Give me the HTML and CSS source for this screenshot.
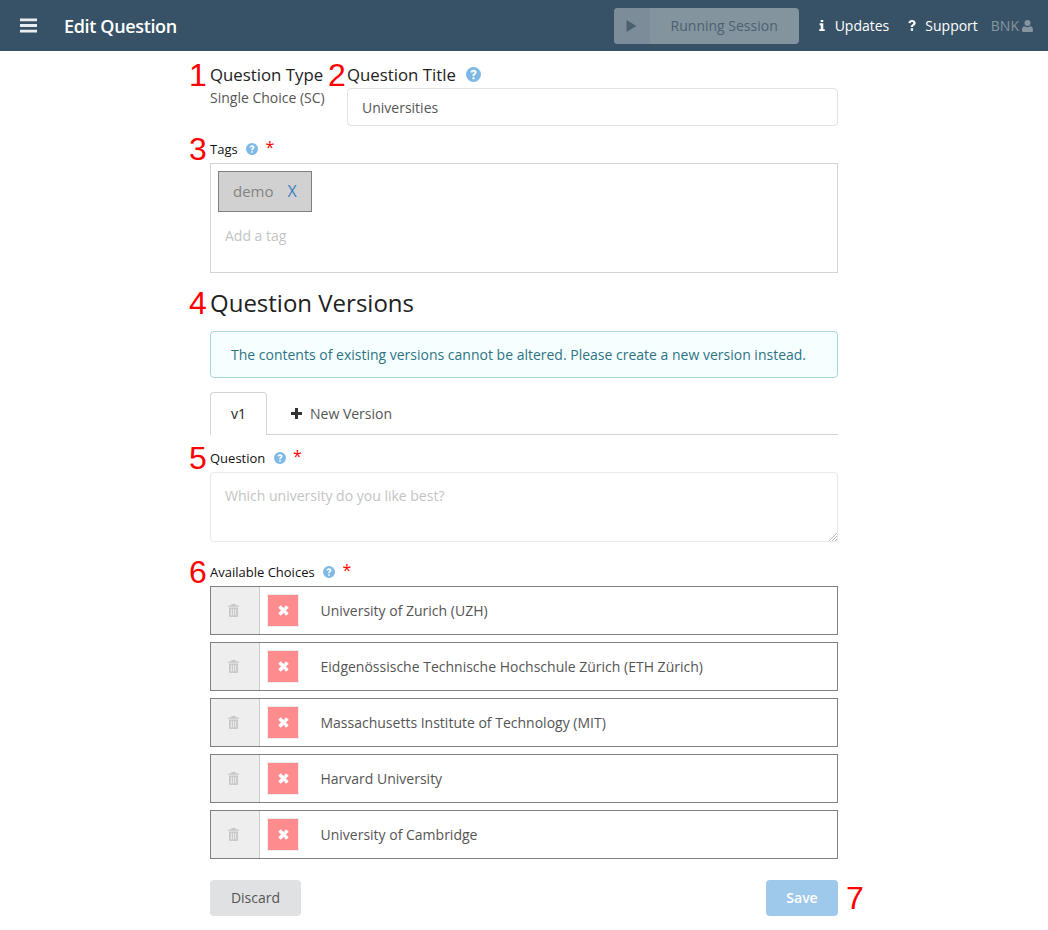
FILE: index.html
```html
<!DOCTYPE html>
<html lang="en">
<head>
  <meta charset="UTF-8" />
  <title>Edit Question</title>
  <link rel="stylesheet" href="styles.css">
</head>
<body>
  <header class="topbar">
    <svg class="menu-icon" viewBox="0 0 16 14"><path d="M0 0.5h16v2.6H0zM0 5.7h16v2.6H0zM0 10.9h16v2.6H0z"/></svg>
    <div class="page-title">Edit Question</div>
    <div class="session-btn">
      <span class="session-play"><svg viewBox="0 0 10 12"><path d="M0 0l10 6L0 12z"/></svg></span>
      <span class="session-text">Running Session</span>
    </div>
    <div class="nav-link nav-updates">
      <svg class="nav-icon" viewBox="0 0 6 12"><path d="M1.6 0h2.8v2.2H1.6zM.4 3.6h4v6.4H6V12H0v-2h1.6V5.6H.4z"/></svg>
      Updates
    </div>
    <div class="nav-link nav-support">
      <svg class="nav-icon" viewBox="0 0 8 12"><path d="M0 3.2C.3 1.2 1.9 0 4 0c2.200 0 4 1.300 4 3.300 0 1.500-.9 2.200-1.800 2.800-.7.5-1.100.8-1.100 1.500H2.700c0-1.400.7-2 1.500-2.600.7-.5 1.200-.8 1.200-1.500 0-.7-.6-1.200-1.400-1.200-.9 0-1.400.5-1.600 1.300zM2.600 9h2.600v2.700H2.600z"/></svg>
      Support
    </div>
    <div class="nav-user">
      BNK<svg class="user-icon" viewBox="0 0 11 12"><circle cx="5.500" cy="3" r="3"/><path d="M0 10.400C0 7.800 1 6.200 2.600 6.200c.8.600 1.800 1 2.900 1s2.100-.4 2.900-1C10 6.200 11 7.800 11 10.400c0 1-.7 1.600-1.600 1.600H1.600C.7 12 0 11.400 0 10.400z"/></svg>
    </div>
  </header>

  <main class="content">
    <div class="head-row">
      <div class="type-col">
        <span class="marker marker-1">1</span>
        <div class="big-label">Question Type</div>
        <div class="type-value">Single Choice (SC)</div>
      </div>
      <div class="title-col">
        <span class="marker marker-2">2</span>
        <div class="big-label">Question Title
          <svg class="help help-big" viewBox="0 0 16 16"><use href="#help-mark"/></svg>
        </div>
        <div class="text-input">Universities</div>
      </div>
    </div>

    <div class="small-label label-tags">
      <span class="marker marker-3">3</span>
      Tags
      <svg class="help" viewBox="0 0 16 16"><use href="#help-mark"/></svg>
      <span class="required">*</span>
    </div>
    <div class="tags-box">
      <div class="tag">demo <span class="tag-x">X</span></div>
      <div class="tag-placeholder">Add a tag</div>
    </div>

    <h2 class="versions-title"><span class="marker marker-4">4</span>Question Versions</h2>
    <div class="notice">The contents of existing versions cannot be altered. Please create a new version instead.</div>

    <div class="tabs">
      <div class="tab tab-active">v1</div>
      <div class="tab tab-new">
        <svg class="plus-icon" viewBox="0 0 11 11"><path d="M4 0h3v4h4v3H7v4H4V7H0V4h4z"/></svg>
        New Version
      </div>
    </div>

    <div class="small-label label-question">
      <span class="marker marker-5">5</span>
      Question
      <svg class="help" viewBox="0 0 16 16"><use href="#help-mark"/></svg>
      <span class="required">*</span>
    </div>
    <div class="question-box">
      Which university do you like best?
      <svg class="grip" viewBox="0 0 9 9"><path d="M9 1L1 9M9 4L4 9M9 7L7 9"/></svg>
    </div>

    <div class="small-label label-choices">
      <span class="marker marker-6">6</span>
      Available Choices
      <svg class="help" viewBox="0 0 16 16"><use href="#help-mark"/></svg>
      <span class="required">*</span>
    </div>
    <div class="choices">
      <div class="choice">
        <div class="choice-drag"><svg class="trash" viewBox="0 0 11 13"><use href="#trash-mark"/></svg></div>
        <div class="choice-wrong"><svg viewBox="0 0 10 10"><use href="#x-mark"/></svg></div>
        <div class="choice-text">University of Zurich (UZH)</div>
      </div>
      <div class="choice">
        <div class="choice-drag"><svg class="trash" viewBox="0 0 11 13"><use href="#trash-mark"/></svg></div>
        <div class="choice-wrong"><svg viewBox="0 0 10 10"><use href="#x-mark"/></svg></div>
        <div class="choice-text">Eidgenössische Technische Hochschule Zürich (ETH Zürich)</div>
      </div>
      <div class="choice">
        <div class="choice-drag"><svg class="trash" viewBox="0 0 11 13"><use href="#trash-mark"/></svg></div>
        <div class="choice-wrong"><svg viewBox="0 0 10 10"><use href="#x-mark"/></svg></div>
        <div class="choice-text">Massachusetts Institute of Technology (MIT)</div>
      </div>
      <div class="choice">
        <div class="choice-drag"><svg class="trash" viewBox="0 0 11 13"><use href="#trash-mark"/></svg></div>
        <div class="choice-wrong"><svg viewBox="0 0 10 10"><use href="#x-mark"/></svg></div>
        <div class="choice-text">Harvard University</div>
      </div>
      <div class="choice">
        <div class="choice-drag"><svg class="trash" viewBox="0 0 11 13"><use href="#trash-mark"/></svg></div>
        <div class="choice-wrong"><svg viewBox="0 0 10 10"><use href="#x-mark"/></svg></div>
        <div class="choice-text">University of Cambridge</div>
      </div>
    </div>

    <div class="actions">
      <div class="btn btn-discard">Discard</div>
      <div class="btn btn-save">Save<span class="marker marker-7">7</span></div>
    </div>
  </main>

  <svg class="defs" width="0" height="0">
    <defs>
      <g id="help-mark">
        <path fill-rule="evenodd" d="M8 0a8 8 0 1 1 0 16A8 8 0 0 1 8 0zM6.900 11v2.100h2.200V11zM8 3C6.200 3 5 4 4.700 5.600l2 .5C6.900 5.300 7.300 4.900 8 4.900c.7 0 1.100.4 1.100.9 0 .5-.4.800-.9 1.200-.8.600-1.300 1.200-1.300 2.500h2.200c0-.7.300-1 .9-1.400.8-.6 1.400-1.300 1.400-2.400C11.400 4.200 10 3 8 3z"/>
      </g>
      <g id="trash-mark">
        <path fill-rule="evenodd" d="M3.500 0h4l.8 1.500H11v1.300H0V1.500h2.700zM1 3.600h9v8.100c0 .7-.6 1.300-1.300 1.300H2.300C1.600 13 1 12.400 1 11.700zM2.800 5v6.500h1V5zM5 5v6.500h1V5zM7.200 5v6.500h1V5z"/>
      </g>
      <path id="x-mark" d="M2.500.3L5 2.800 7.500.3 9.700 2.500 7.200 5l2.500 2.500-2.200 2.200L5 7.200 2.500 9.700.3 7.500 2.800 5 .3 2.500z"/>
    </defs>
  </svg>
</body>
</html>
```

FILE: styles.css
```css
* { box-sizing: border-box; }
body { margin: 0; font-family: "Open Sans", sans-serif; font-size: 14px; color: #212121; background: #fff; }

.topbar { height: 51px; background: #375266; color: #fff; display: flex; align-items: center; font-size: 14px; }
.menu-icon { width: 17px; height: 15px; margin-left: 20px; fill: #fff; opacity: 0.9; }
.page-title { margin-left: 27px; font-size: 18px; font-weight: 600; letter-spacing: -0.35px; flex: 1; }
.session-btn { width: 185px; height: 36px; display: flex; background: #84949f; border-radius: 4px; color: #4c6170; overflow: hidden; }
.session-play { width: 36px; background: #7c8d99; display: flex; align-items: center; justify-content: center; }
.session-play svg { width: 11px; height: 12px; fill: #4c6170; margin-left: -1px; }
.session-text { flex: 1; text-align: center; line-height: 36px; }
.nav-link { display: flex; align-items: center; }
.nav-updates { margin-left: 19px; }
.nav-support { margin-left: 19px; }
.nav-icon { height: 11px; width: 8px; fill: #fff; margin-right: 9px; }
.nav-user { margin-left: 13px; margin-right: 15px; color: #87959f; display: flex; align-items: center; }
.user-icon { width: 11px; height: 12px; fill: #87959f; margin-left: 3px; }

.content { width: 628px; margin: 0 auto; }
.marker { position: absolute; font-family: "Liberation Sans", sans-serif; font-size: 32px; font-weight: 400; color: #f00; line-height: 32px; }

.head-row { display: flex; padding-top: 13px; }
.type-col { position: relative; width: 137px; }
.title-col { position: relative; flex: 1; }
.big-label { font-size: 16.8px; line-height: 22px; color: #212121; white-space: nowrap; }
.type-value { font-size: 14px; line-height: 18px; color: #555; margin-top: 3px; }
.help { width: 12px; height: 12px; fill: #7db8e6; margin-left: 5px; vertical-align: -1px; }
.help-big { width: 15px; height: 15px; margin-left: 6px; vertical-align: -1px; }
.text-input { height: 38px; margin-top: 2px; padding-left: 14px; border: 1px solid #e2e2e2; border-radius: 4px; line-height: 37px; color: #555; }

.marker-1 { left: -21px; top: -5px; }
.marker-2 { left: -19px; top: -5px; }
.marker-3 { left: -21px; top: -7px; }
.marker-4 { left: -21px; top: 2px; }
.marker-5 { left: -21px; top: -7px; }
.marker-6 { left: -21px; top: -7px; }
.marker-7 { left: 80px; top: 2px; }

.small-label { position: relative; font-size: 13px; line-height: 18px; color: #111; white-space: nowrap; }
.required { color: #f00; font-size: 16px; margin-left: 4px; vertical-align: 1px; line-height: 10px; }
.label-tags { margin-top: 14px; margin-bottom: 5px; }
.label-question { margin-top: 14px; margin-bottom: 5px; }
.label-choices { margin-top: 21px; margin-bottom: 5px; }

.tags-box { height: 110px; padding: 7px; border: 1px solid #d4d4d4; }
.tag { width: 94px; height: 41px; padding-left: 14px; background: #d1d1d1; border: 1px solid #808080; font-size: 15px; line-height: 39px; color: #848484; }
.tag-x { color: #3b7fc4; margin-left: 10px; font-size: 16px; }
.tag-placeholder { margin-top: 14px; padding-left: 7px; line-height: 20px; color: #c4c4c4; }

.versions-title { position: relative; margin: 12px 0 0; font-size: 24px; font-weight: 400; line-height: 36px; color: #212121; }
.notice { height: 47px; margin-top: 10px; padding-left: 20px; line-height: 45px; background: #f5ffff; border: 1px solid #a9d5d9; border-radius: 4px; color: #2f7284; }

.tabs { display: flex; margin-top: 14px; height: 43px; border-bottom: 1px solid #d4d4d4; }
.tab { height: 43px; line-height: 42px; }
.tab-active { width: 57px; text-align: center; background: #fff; border: 1px solid #d4d4d4; border-bottom: 0; border-radius: 4px 4px 0 0; color: #212121; }
.tab-new { margin-left: 24px; color: #555; display: flex; align-items: center; }
.plus-icon { width: 11px; height: 11px; fill: #333; margin-right: 8px; }

.question-box { position: relative; height: 70px; padding: 13px 14px; border: 1px solid #e9e9e9; border-radius: 4px; line-height: 20px; color: #c4c4c4; }
.grip { position: absolute; right: 0; bottom: 0; width: 9px; height: 9px; stroke: #aaa; stroke-width: 0.8; fill: none; }

.choices { display: flex; flex-direction: column; gap: 7px; }
.choice { height: 49px; display: flex; align-items: center; border: 1px solid #808080; }
.choice-drag { width: 49px; height: 100%; padding-right: 3px; background: #eee; border-right: 1px solid #ccc; display: flex; align-items: center; justify-content: center; }
.trash { width: 11px; height: 13px; fill: #c8c8c8; }
.choice-wrong { width: 32px; height: 33px; margin-left: 7px; background: #fe8c8e; border: 1px solid #eee; display: flex; align-items: center; justify-content: center; }
.choice-wrong svg { width: 11px; height: 11px; fill: #fff; }
.choice-text { margin-left: 21.5px; color: #555; }

.actions { display: flex; justify-content: space-between; margin-top: 21px; }
.btn { height: 36px; line-height: 36px; text-align: center; border-radius: 4px; }
.btn-discard { width: 91px; background: #e0e1e3; color: #555; }
.btn-save { position: relative; width: 72px; background: #9fc9ea; color: #fff; font-weight: 600; }
.defs { position: absolute; }
```
